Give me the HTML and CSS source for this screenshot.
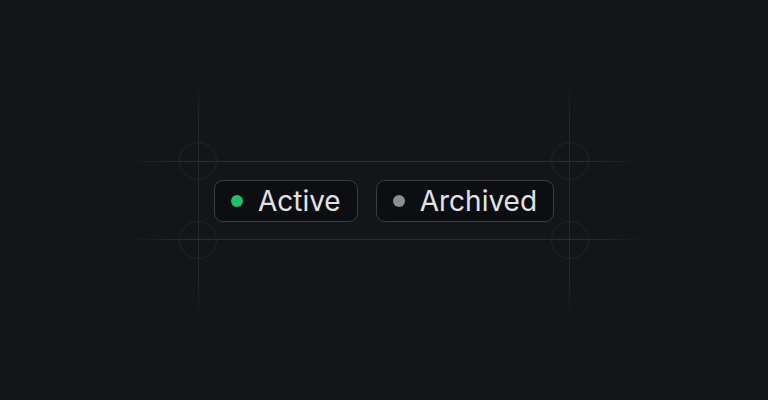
FILE: index.html
```html
<!DOCTYPE html>
<html lang="en">
<head>
<meta charset="utf-8">
<title>Badges</title>
<link rel="stylesheet" href="styles.css">
</head>
<body>
<main class="stage">
  <div class="frame">
    <span class="guide guide-h guide-top"></span>
    <span class="guide guide-h guide-bottom"></span>
    <span class="guide guide-v guide-left"></span>
    <span class="guide guide-v guide-right"></span>
    <span class="ring ring-tl"></span>
    <span class="ring ring-tr"></span>
    <span class="ring ring-bl"></span>
    <span class="ring ring-br"></span>
    <div class="badges">
      <span class="badge"><span class="dot dot-active"></span>Active</span>
      <span class="badge"><span class="dot dot-archived"></span>Archived</span>
    </div>
  </div>
</main>
</body>
</html>
```

FILE: styles.css
```css
html, body {
  margin: 0;
  padding: 0;
  background: #131519;
}
.stage {
  width: 768px;
  height: 400px;
  display: flex;
  align-items: center;
  justify-content: center;
}
.frame {
  position: relative;
  padding: 19px 16px 18px 16px;
}
.badges {
  display: flex;
  gap: 18px;
}
.badge {
  display: inline-flex;
  align-items: center;
  gap: 15px;
  box-sizing: border-box;
  height: 42px;
  padding: 0 16px 0 16px;
  border: 1px solid #3a3d43;
  border-radius: 9px;
  background: #0d0e11;
  color: #e2e3e6;
  font-family: Inter, "Noto Sans", sans-serif;
  font-size: 28px;
  line-height: 1;
}
.dot {
  width: 12px;
  height: 12px;
  border-radius: 50%;
  flex: none;
}
.dot-active { background: #1fbf6b; }
.dot-archived { background: #8c8e94; }

.guide {
  position: absolute;
  pointer-events: none;
}
.guide-h {
  height: 1px;
  left: -72px;
  right: -78px;
  background: linear-gradient(to right, rgba(44,47,53,0) 0%, #2a2d32 12%, #2a2d32 88%, rgba(44,47,53,0) 100%);
}
.guide-top { top: 0; }
.guide-bottom { bottom: 0; }
.guide-v {
  width: 1px;
  top: -82px;
  bottom: -81px;
  background: linear-gradient(to bottom, rgba(44,47,53,0) 0%, #25282d 18%, #25282d 82%, rgba(44,47,53,0) 100%);
}
.guide-left { left: 0; }
.guide-right { right: 0; }
.ring {
  position: absolute;
  width: 36px;
  height: 36px;
  border: 1px solid #212429;
  border-radius: 50%;
  pointer-events: none;
}
.ring-tl { left: -19px; top: -19px; }
.ring-tr { right: -19px; top: -19px; }
.ring-bl { left: -19px; bottom: -19px; }
.ring-br { right: -19px; bottom: -19px; }
```
